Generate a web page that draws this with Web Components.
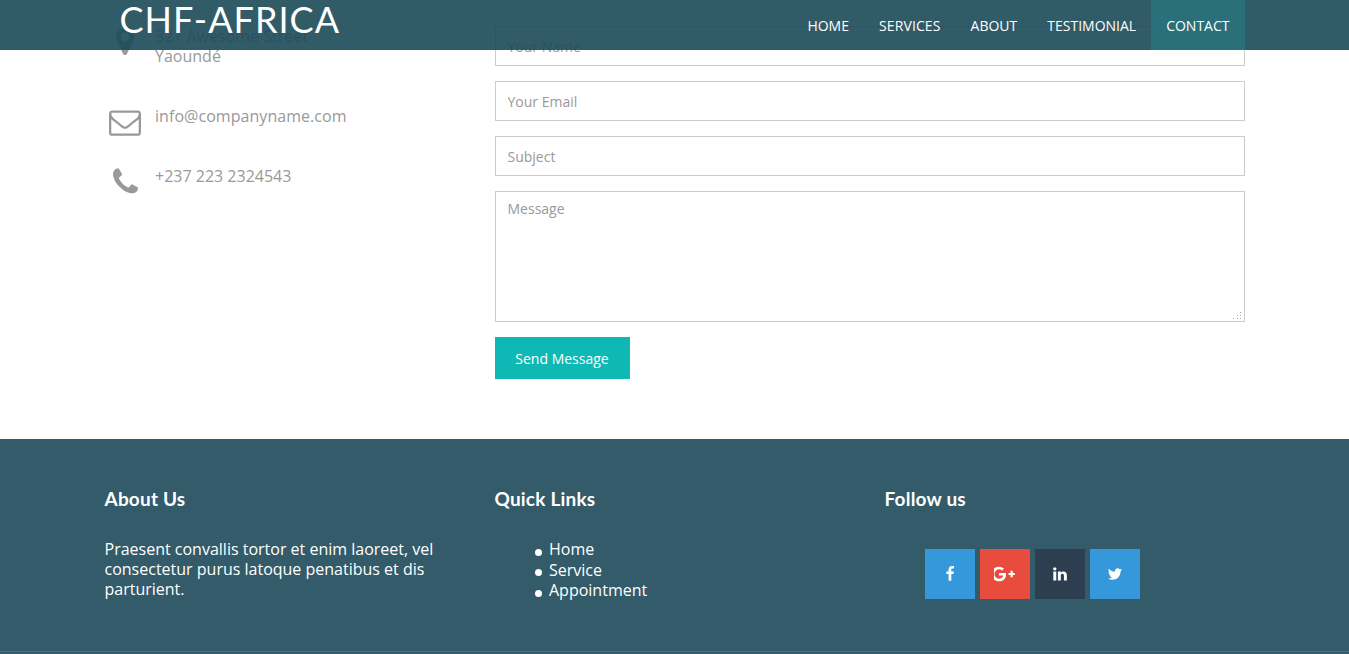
<!DOCTYPE html>
<html lang="en"><head><meta charset="utf-8"><title>CHF-Africa</title>
<style>
html,body{margin:0;padding:0;background:#fff;font-family:"Open Sans",sans-serif;}
body{height:654px;overflow:hidden;position:relative;}
</style></head><body>
<site-nav></site-nav>
<contact-section>
  <contact-info slot="info"></contact-info>
  <contact-form slot="form"></contact-form>
</contact-section>
<site-footer></site-footer>
<script>
const ICONS={
 marker:'<svg viewBox="0 128 1024 1536" width="18" height="27" fill="currentColor"><path d="M768 640q0-106-75-181t-181-75-181 75-75 181 75 181 181 75 181-75 75-181zm256 0q0 109-33 179l-364 774q-16 33-47.5 52t-67.5 19-67.5-19-46.5-52l-365-774q-33-70-33-179 0-212 150-362t362-150 362 150 150 362z"/></svg>',
 envelope:'<svg viewBox="0 0 1792 1792" width="32" height="32" fill="currentColor"><path d="M1664 1504v-768q-32 36-69 66-268 206-426 338-51 43-83 67t-86.5 48.5-102.5 24.5h-2q-48 0-102.5-24.5t-86.5-48.5-83-67q-158-132-426-338-37-30-69-66v768q0 13 9.5 22.5t22.5 9.5h1472q13 0 22.5-9.5t9.5-22.5zm0-1051v-24.5l-.5-13-3-12.5-5.5-9-9-7.5-14-2.5h-1472q-13 0-22.5 9.5t-9.5 22.5q0 168 147 284 193 152 401 317 6 5 35 29.5t46 37.5 44.5 31.5 50.5 27.5 43 9h2q20 0 43-9t50.5-27.5 44.5-31.5 46-37.5 35-29.5q208-165 401-317 54-43 100.5-115.5t46.5-131.5zm128-37v1088q0 66-47 113t-113 47h-1472q-66 0-113-47t-47-113v-1088q0-66 47-113t113-47h1472q66 0 113 47t47 113z"/></svg>',
 phone:'<svg viewBox="0 0 1408 1792" width="25" height="32" fill="currentColor" style="margin-left:1px"><path transform="translate(-192 0)" d="M1600 1240q0 27-10 70.5t-21 68.5q-21 50-122 106-94 51-186 51-27 0-53-3.5t-57.5-12.5-47-14.5-55.5-20.5-49-18q-98-35-175-83-127-79-264-216t-216-264q-48-77-83-175-3-9-18-49t-20.5-55.5-14.5-47-12.5-57.5-3.5-53q0-92 51-186 56-101 106-122 25-11 68.5-21t70.5-10q14 0 21 3 18 6 53 76 11 19 30 54t35 63.5 31 53.5q3 4 17.5 25t21.5 35.5 7 28.5q0 20-28.5 50t-62 55-62 53-28.5 46q0 9 5 22.5t8.5 20.5 14 24 11.5 19q76 137 174 235t235 174q2 1 19 11.5t24 14 20.5 8.5 22.5 5q18 0 46-28.5t53-62 55-62 50-28.5q14 0 28.5 7t35.5 21.5 25 17.5q25 15 53.5 31t63.5 35 54 30q70 35 76 53 3 7 3 21z"/></svg>',
 f:'<svg viewBox="0 0 1792 1792" width="16" height="16" fill="currentColor"><path d="M1343 12v264h-157q-86 0-116 36t-30 108v189h293l-39 296h-254v759h-306v-759h-255v-296h255v-218q0-186 104-288.5t277-102.5q147 0 228 12z"/></svg>',
 g:'<svg viewBox="0 0 2048 1792" width="21" height="18" fill="currentColor"><path d="M1181 913q0 208-87 370.5t-248 254-369 91.5q-149 0-285-58t-234-156-156-234-58-285 58-285 156-234 234-156 285-58q286 0 491 192l-199 191q-117-113-292-113-123 0-227.5 62t-165.5 168.5-61 232.5 61 232.5 165.5 168.5 227.5 62q83 0 152.5-23t114.5-57.5 78.5-78.5 49-83 21.5-74h-416v-252h692q12 63 12 122zm867-122v210h-209v209h-210v-209h-209v-210h209v-209h210v209h209z"/></svg>',
 in:'<svg viewBox="0 0 1792 1792" width="16" height="16" fill="currentColor"><path d="M477 625v991h-330v-991h330zm21-306q1 73-50.5 122t-135.5 49h-2q-82 0-132-49t-50-122q0-74 51.5-122.5t134.5-48.5 133 48.5 51 122.5zm1166 729v568h-329v-530q0-105-40.5-164.5t-126.5-59.5q-63 0-105.5 34.5t-63.5 85.5q-11 30-11 81v553h-329q2-399 2-647t-1-296l-1-48h329v144h-2q20-32 41-56t56.5-52 87-43.5 114.5-15.5q171 0 275 113.5t104 332.5z"/></svg>',
 tw:'<svg viewBox="0 0 1792 1792" width="16" height="16" fill="currentColor"><path d="M1684 408q-67 98-162 167 1 14 1 42 0 130-38 259.5t-115.5 248.5-184.5 210.5-258 146-323 54.5q-271 0-496-145 35 4 78 4 225 0 401-138-105-2-188-64.5t-114-159.5q33 5 61 5 43 0 85-11-112-23-185.5-111.5t-73.5-205.5v-4q68 38 146 41-66-44-105-115t-39-154q0-88 44-163 121 149 294.5 238.5t371.5 99.5q-8-38-8-74 0-134 94.5-228.5t228.5-94.5q140 0 236 102 109-21 205-78-37 115-142 178 93-10 186-50z"/></svg>'
};
function def(name,html){customElements.define(name,class extends HTMLElement{constructor(){super();this.attachShadow({mode:'open'}).innerHTML=html(this);}});}
def('site-nav',()=>`<style>
:host{display:block;position:absolute;top:0;left:0;right:0;height:50px;background:rgba(28,73,88,.9);z-index:10;font-family:"Open Sans",sans-serif}
.wrap{width:1140px;margin:0 auto;display:flex;justify-content:space-between;height:50px}
.logo{font-family:Lato,sans-serif;font-size:36px;line-height:38px;color:#fff;padding-left:15px;letter-spacing:1px;white-space:nowrap}
nav{display:flex}
a{display:block;padding:16px 15px 0;height:34px;color:#fff;font-size:14px;line-height:20px;text-decoration:none}
a.w{letter-spacing:.12px}
a.on{background:#2a6f7a}
</style><div class="wrap"><div class="logo">CHF-AFRICA</div><nav><a>HOME</a><a class="w">SERVICES</a><a>ABOUT</a><a>TESTIMONIAL</a><a class="on">CONTACT</a></nav></div>`);
def('contact-section',()=>`<style>
:host{display:block;height:439px;box-sizing:border-box;padding:26px 104.5px 0}
.row{display:flex}
.a{width:390px;flex:none}.b{flex:1}
</style><div class="row"><div class="a"><slot name="info"></slot></div><div class="b"><slot name="form"></slot></div></div>`);
def('contact-info',()=>`<style>
:host{display:block;color:#999;font-size:16px;line-height:20px}
.item{display:flex;align-items:flex-start}
.ic{width:40px;margin-right:10.5px;display:flex;justify-content:center;flex:none}
.m{height:60px}
</style>
<div class="item" style="height:80px"><span class="ic" style="padding-top:2px">${ICONS.marker}</span><span>321 Awesome Street<br>Yaoundé</span></div>
<div class="item m"><span class="ic">${ICONS.envelope}</span><span style="letter-spacing:.05px">info@companyname.com</span></div>
<div class="item m"><span class="ic">${ICONS.phone}</span><span>+237 223 2324543</span></div>`);
def('contact-form',()=>`<style>
:host{display:block;font-family:"Open Sans",sans-serif}
form{display:flex;flex-direction:column;align-items:flex-start;gap:15px}
input,textarea{box-sizing:border-box;width:750px;border:1px solid #ccc;padding:0 12px;font:14px/20px "Open Sans",sans-serif;color:#555;background:#fff;outline:0;margin:0;display:block;border-radius:0}
input{height:40px}
textarea{height:131px;padding-top:7px;resize:none}
::placeholder{color:#999;opacity:1}
.ta{position:relative;display:block}
.ta svg{position:absolute;right:3px;bottom:2px;display:block}
button{width:135px;height:42px;border:0;background:#0eb8b4;color:#fff;font:14px "Open Sans",sans-serif;padding:0}
</style><form><input placeholder="Your Name"><input placeholder="Your Email"><input placeholder="Subject"><div class="ta"><textarea placeholder="Message"></textarea><svg width="10" height="10" fill="#aaa"><rect x="8" y="2" width="1" height="1"/><rect x="5" y="5" width="1" height="1"/><rect x="8" y="5" width="1" height="1"/><rect x="1" y="8" width="1" height="1"/><rect x="5" y="8" width="1" height="1"/><rect x="8" y="8" width="1" height="1"/></svg></div><button type="button">Send Message</button></form>`);
def('social-btn',(el)=>`<style>
:host{display:flex;width:50px;height:50px;align-items:center;justify-content:center;color:#fff;background:${el.getAttribute('bg')}}
svg{display:block}
</style>${ICONS[el.getAttribute('icon')]}`);
def('site-footer',()=>`<style>
:host{display:block;height:215px;box-sizing:border-box;background:#335b69;color:#fff;padding:47px 104.5px 0;font-size:16px;line-height:20px;position:relative}
:host::after{content:"";position:absolute;left:0;right:0;bottom:2px;height:1px;background:#4a7080}
.row{display:flex}
.c{width:390px;flex:none}
h3{margin:0 0 27px;font:700 19px/26px Lato,sans-serif;letter-spacing:.2px}
p{margin:0;width:345px}
ul{margin:0;padding:.3px 0 0 54.5px;list-style:none}
li{line-height:20.4px;position:relative}
li::before{content:"";position:absolute;left:-14.5px;top:9.7px;width:7px;height:7px;border-radius:50%;background:#fff}
.s{display:flex;gap:5px;margin-left:40px;margin-top:37px}
</style><div class="row"><div class="c"><h3>About Us</h3><p>Praesent convallis tortor et enim laoreet, vel consectetur purus latoque penatibus et dis parturient.</p></div>
<div class="c"><h3>Quick Links</h3><ul><li>Home</li><li>Service</li><li>Appointment</li></ul></div>
<div class="c"><h3>Follow us</h3><div class="s"><social-btn bg="#3498db" icon="f"></social-btn><social-btn bg="#e74c3c" icon="g"></social-btn><social-btn bg="#2c3e50" icon="in"></social-btn><social-btn bg="#3498db" icon="tw"></social-btn></div></div></div>`);
</script></body></html>
